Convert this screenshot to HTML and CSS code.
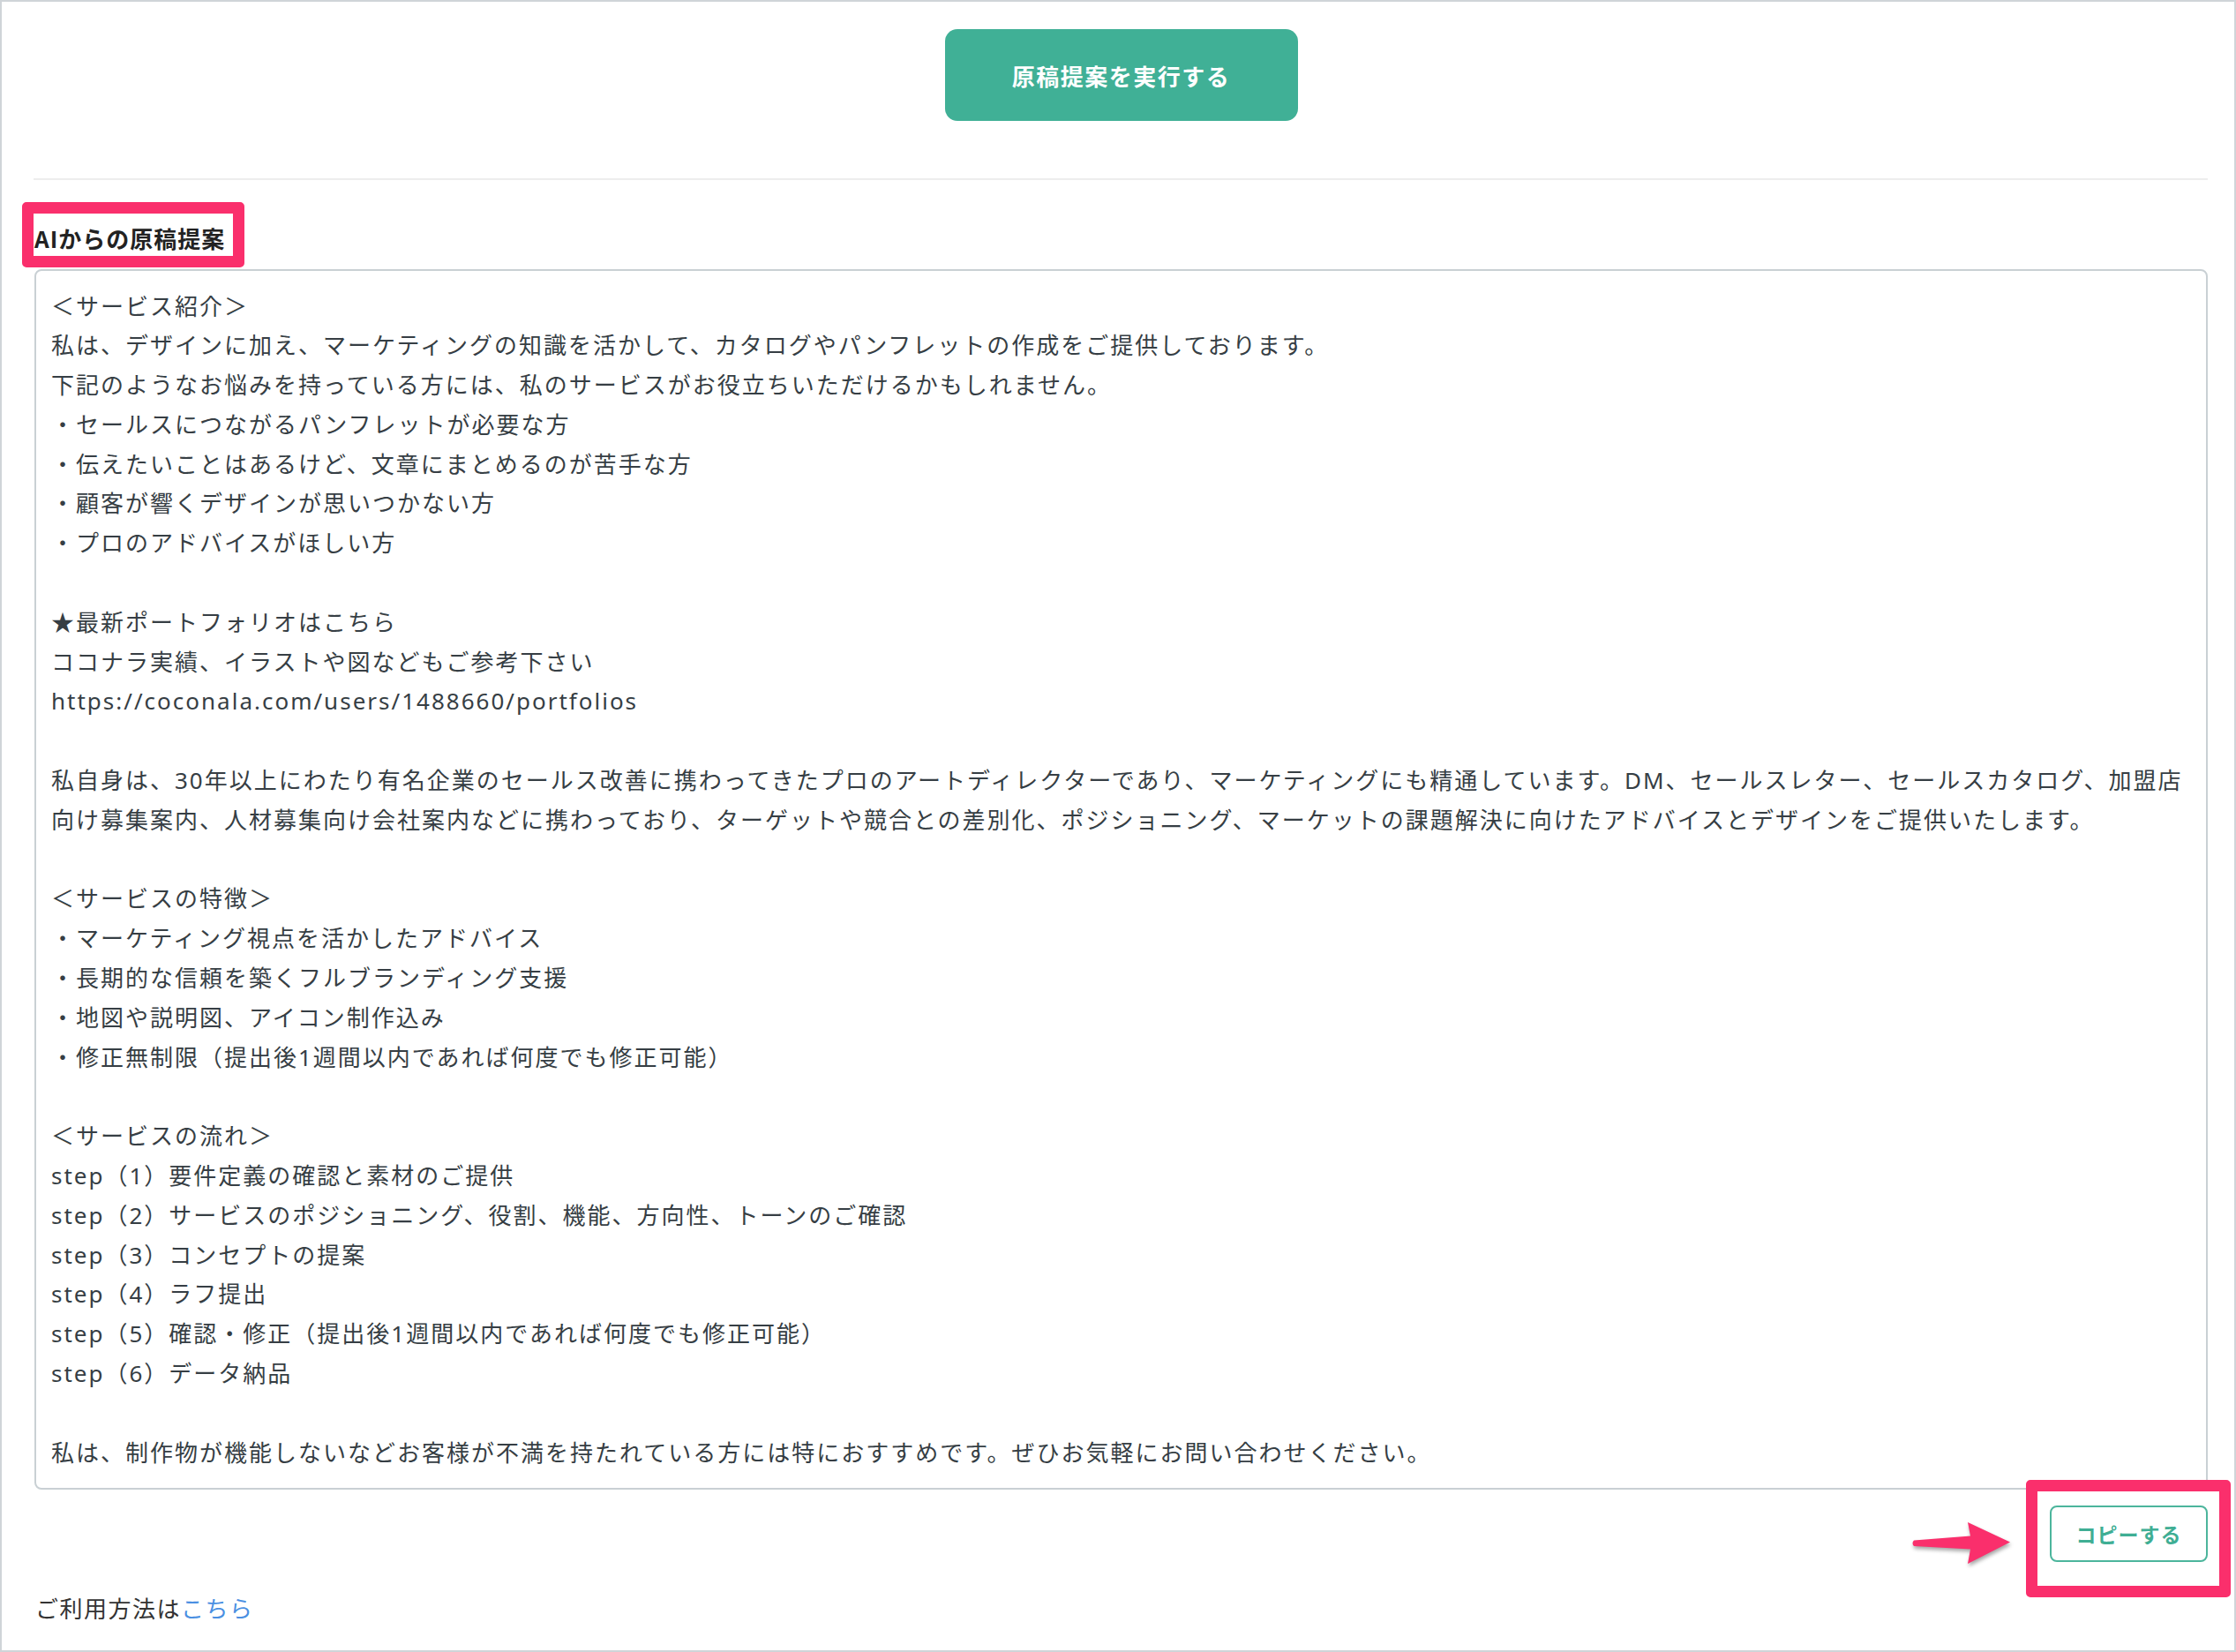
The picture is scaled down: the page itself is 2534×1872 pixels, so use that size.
FILE: index.html
```html
<!DOCTYPE html>
<html lang="ja">
<head>
  <meta charset="UTF-8">
  <title>AIからの原稿提案</title>
  <link rel="stylesheet" href="styles.css">
</head>
<body>
  <div class="frame">
    <div class="actions">
      <button class="run-btn">原稿提案を実行する</button>
    </div>

    <hr class="divider">

    <h2 class="result-title">AIからの原稿提案<span class="mark"></span></h2>

    <pre class="draft">
＜サービス紹介＞
私は、デザインに加え、マーケティングの知識を活かして、カタログやパンフレットの作成をご提供しております。
下記のようなお悩みを持っている方には、私のサービスがお役立ちいただけるかもしれません。
・セールスにつながるパンフレットが必要な方
・伝えたいことはあるけど、文章にまとめるのが苦手な方
・顧客が響くデザインが思いつかない方
・プロのアドバイスがほしい方

★最新ポートフォリオはこちら
ココナラ実績、イラストや図などもご参考下さい
https://coconala.com/users/1488660/portfolios

私自身は、30年以上にわたり有名企業のセールス改善に携わってきたプロのアートディレクターであり、マーケティングにも精通しています。DM、セールスレター、セールスカタログ、加盟店
向け募集案内、人材募集向け会社案内などに携わっており、ターゲットや競合との差別化、ポジショニング、マーケットの課題解決に向けたアドバイスとデザインをご提供いたします。

＜サービスの特徴＞
・マーケティング視点を活かしたアドバイス
・長期的な信頼を築くフルブランディング支援
・地図や説明図、アイコン制作込み
・修正無制限（提出後1週間以内であれば何度でも修正可能）

＜サービスの流れ＞
step（1）要件定義の確認と素材のご提供
step（2）サービスのポジショニング、役割、機能、方向性、トーンのご確認
step（3）コンセプトの提案
step（4）ラフ提出
step（5）確認・修正（提出後1週間以内であれば何度でも修正可能）
step（6）データ納品

私は、制作物が機能しないなどお客様が不満を持たれている方には特におすすめです。ぜひお気軽にお問い合わせください。</pre>

    <div class="copy-row">
      <div class="copy-wrap">
        <!-- 注釈の矢印 -->
        <svg class="arrow" viewBox="0 0 112 47" width="112" height="47">
          <path d="M3 20.5 Q0 23.5 3 27 L67 30.5 L64 47 L112 22.5 L64 0 L67 15.5 Z" fill="#fa2f6c"/>
        </svg>
        <span class="mark mark-copy"></span>
        <button class="copy-btn">コピーする</button>
      </div>
    </div>

    <p class="help">ご利用方法は<a href="#">こちら</a></p>
  </div>
</body>
</html>
```

FILE: styles.css
```css
html, body {
  margin: 0;
  padding: 0;
  background-color: #fff;
}

body {
  font-family: "Noto Sans CJK JP", "Noto Sans", sans-serif;
  color: #363e44;
}

/* スクリーンショット全体の枠 */
.frame {
  width: 2534px;
  height: 1872px;
  box-sizing: border-box;
  border: 2px solid #cfd4d8;
  padding: 31px 30px 0 37px;
  overflow: hidden;
}

.actions {
  display: flex;
  justify-content: center;
}

.run-btn {
  width: 400px;
  height: 104px;
  border: none;
  border-radius: 14px;
  background-color: #40b096;
  color: #fff;
  font-family: inherit;
  font-size: 26px;
  font-weight: 700;
  letter-spacing: 1.5px;
  cursor: pointer;
}

.divider {
  margin: 65px 0 0 -1px;
  height: 2px;
  border: none;
  background-color: #ededed;
}

.result-title {
  position: relative;
  width: fit-content;
  margin: 38px 0 0;
  padding: 8px 9px 0 0;
  font-size: 26px;
  font-weight: 700;
  line-height: 40px;
  letter-spacing: 1px;
  color: #222;
}

/* 注釈用のピンク枠 */
.mark {
  position: absolute;
  top: -13px;
  left: -14px;
  right: -13px;
  bottom: -13px;
  border: 13px solid #fa2f6c;
  border-radius: 5px;
  pointer-events: none;
}

.draft {
  margin: 15px 0 0;
  padding: 17.5px 17px 17.5px;
  border: 2px solid #c9d0d4;
  border-radius: 8px;
  font-family: "Noto Sans", "Noto Sans CJK JP", sans-serif;
  font-size: 26px;
  line-height: 44.8px;
  letter-spacing: 2px;
  color: #363e44;
  white-space: pre;
  overflow: hidden;
}

.copy-row {
  display: flex;
  justify-content: flex-end;
  margin-top: 18px;
}

.copy-wrap {
  position: relative;
}

.copy-btn {
  display: block;
  width: 179px;
  height: 64px;
  border: 2px solid #4cb59c;
  border-radius: 8px;
  background-color: #fff;
  color: #3fae94;
  font-family: inherit;
  font-size: 23px;
  font-weight: 700;
  letter-spacing: 1px;
  cursor: pointer;
}

.mark-copy {
  top: -29px;
  left: -27px;
  right: -26px;
  bottom: -40px;
}

.arrow {
  position: absolute;
  left: -157px;
  top: 19px;
  filter: drop-shadow(1px 3px 2px rgba(0, 0, 0, 0.35));
}

.help {
  margin: 30px 0 0 1px;
  font-size: 26px;
  line-height: 44.8px;
  letter-spacing: 1.5px;
  color: #333;
}

.help a {
  color: #4a8fe2;
  text-decoration: none;
}
```
